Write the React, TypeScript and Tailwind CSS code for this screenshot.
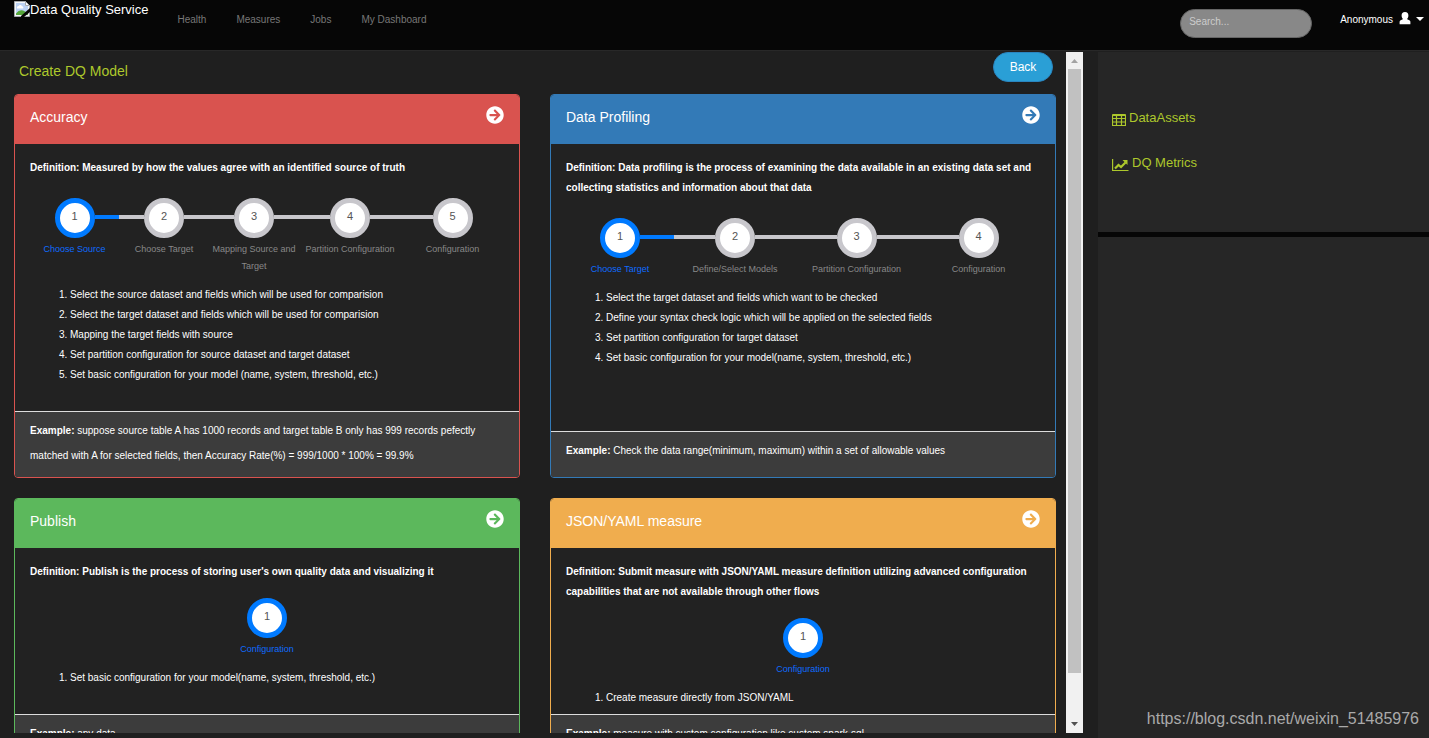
import { useId } from "react";
import clsx from "clsx";
import { FaArrowCircleRight } from "react-icons/fa";

type Card = {
  title: string;
  border: string;
  header: string;
  columns: string;
  definition: string;
  steps: string[];
  notes: string[];
  example: string;
};

const navLinks = ["Health", "Measures", "Jobs", "My Dashboard"];

const cards: Card[] = [
  {
    title: "Accuracy",
    border: "border-[#d9534f]",
    header: "bg-[#d9534f]",
    columns: "grid-cols-[89fr_90fr_90fr_102fr_103fr]",
    definition: "Measured by how the values agree with an identified source of truth",
    steps: [
      "Choose Source",
      "Choose Target",
      "Mapping Source and Target",
      "Partition Configuration",
      "Configuration",
    ],
    notes: [
      "Select the source dataset and fields which will be used for comparision",
      "Select the target dataset and fields which will be used for comparision",
      "Mapping the target fields with source",
      "Set partition configuration for source dataset and target dataset",
      "Set basic configuration for your model (name, system, threshold, etc.)",
    ],
    example:
      "suppose source table A has 1000 records and target table B only has 999 records pefectly matched with A for selected fields, then Accuracy Rate(%) = 999/1000 * 100% = 99.9%",
  },
  {
    title: "Data Profiling",
    border: "border-[#337ab7]",
    header: "bg-[#337ab7]",
    columns: "grid-cols-[108fr_122fr_121fr_123fr]",
    definition:
      "Data profiling is the process of examining the data available in an existing data set and collecting statistics and information about that data",
    steps: [
      "Choose Target",
      "Define/Select Models",
      "Partition Configuration",
      "Configuration",
    ],
    notes: [
      "Select the target dataset and fields which want to be checked",
      "Define your syntax check logic which will be applied on the selected fields",
      "Set partition configuration for target dataset",
      "Set basic configuration for your model(name, system, threshold, etc.)",
    ],
    example: "Check the data range(minimum, maximum) within a set of allowable values",
  },
  {
    title: "Publish",
    border: "border-[#5cb85c]",
    header: "bg-[#5cb85c]",
    columns: "grid-cols-1",
    definition: "Publish is the process of storing user's own quality data and visualizing it",
    steps: ["Configuration"],
    notes: ["Set basic configuration for your model(name, system, threshold, etc.)"],
    example: "any data",
  },
  {
    title: "JSON/YAML measure",
    border: "border-[#f0ad4e]",
    header: "bg-[#f0ad4e]",
    columns: "grid-cols-1",
    definition:
      "Submit measure with JSON/YAML measure definition utilizing advanced configuration capabilities that are not available through other flows",
    steps: ["Configuration"],
    notes: ["Create measure directly from JSON/YAML"],
    example: "measure with custom configuration like custom spark-sql",
  },
];

const BrokenImageIcon = () => (
  <svg width="16" height="16" viewBox="0 0 16 16" aria-hidden="true">
    <path d="M0.5 0.5H11.5L15.5 4.5V15.5H0.5Z" fill="#f4f6f8" stroke="#a4a8ac" />
    <path d="M2 2H11V5H14V14H2Z" fill="#bdd3f5" />
    <path d="M3 7.5a1.8 1.8 0 0 1 1.500-2.500 2 2 0 0 1 3.700 0.300 1.300 1.300 0 0 1 0.800 2.200Z" fill="#fff" />
    <path d="M2 14V12.500Q6 7 11 10.500L14 12V14Z" fill="#55a63a" />
    <path d="M11.500 0.500V4.500H15.500Z" fill="#fff" stroke="#a4a8ac" />
    <path d="M16 7L7 15V16H10L16 11Z" fill="#060606" />
  </svg>
);

const UserIcon = () => (
  <svg width="12" height="13" viewBox="0 0 12 13" fill="currentColor" aria-hidden="true">
    <path d="M6 0C8.400 0 9.400 1.600 9.400 3.400 9.400 5 8.800 6 8.200 6.800V7.200L10.400 8.300Q11.400 8.900 11.400 9.800V12.200H0.600V9.800Q0.600 8.900 1.600 8.300L3.800 7.200V6.800C3.200 6 2.600 5 2.600 3.400 2.600 1.600 3.600 0 6 0Z" />
  </svg>
);

const TableIcon = () => (
  <svg width="14" height="14" viewBox="0 0 14 14" fill="none" stroke="currentColor" className="mb-px" aria-hidden="true">
    <path d="M0.500 2H13.500" strokeWidth="2" />
    <path d="M0.500 1.500V12.500H13.500V1.500M0.500 5.500H13.500M0.500 9H13.500M4.500 2V12.500M9.500 2V12.500" strokeWidth="1.200" />
  </svg>
);

const LineChartIcon = () => (
  <svg width="17" height="14" viewBox="0 0 17 14" fill="none" stroke="currentColor" className="mb-px" aria-hidden="true">
    <path d="M0.600 1V12.500H16.500" strokeWidth="1.200" />
    <path d="M3 10.500L6.500 7 9 9 13.500 4.500" strokeWidth="2.200" />
    <path d="M10.500 2H15.500V7Z" fill="currentColor" stroke="none" />
  </svg>
);

function Stepper({ steps, columns }: { steps: string[]; columns: string }) {
  return (
    <div className={clsx("grid", columns, steps.length > 1 ? "mt-5" : "mt-4")}>
      {steps.map((label, i) => {
        const active = i === 0;
        const last = i === steps.length - 1;
        return (
          <div key={label} className="min-w-0 text-center">
            <div className="flex items-center">
              <span className={clsx("mb-0.5 h-1 flex-1", !active && "bg-[#c8c7cc]")} />
              <span
                className={clsx(
                  "flex size-10 items-center justify-center rounded-full border-5 bg-white pb-1 text-[11px] text-[#555]",
                  active ? "border-[#007aff]" : "border-[#c8c7cc]"
                )}
              >
                {i + 1}
              </span>
              <span
                className={clsx(
                  "mb-0.5 h-1 flex-1",
                  !last && (active ? "bg-[#007aff]" : "bg-[#c8c7cc]")
                )}
              />
            </div>
            <p
              className={clsx(
                "mt-[3px] text-[9px] leading-[17px]",
                active ? "text-[#0f6bff]" : "text-[#888]"
              )}
            >
              {label}
            </p>
          </div>
        );
      })}
    </div>
  );
}

function ModelCard({ card }: { card: Card }) {
  return (
    <section className={clsx("flex flex-col overflow-hidden rounded border bg-[#222]", card.border)}>
      <div className={clsx("flex h-[49px] items-start justify-between px-[15px] pt-[11px]", card.header)}>
        <h2 className="text-sm leading-[22px]">{card.title}</h2>
        <button type="button" aria-label={`Create ${card.title}`} className="cursor-pointer">
          <FaArrowCircleRight size={18} />
        </button>
      </div>
      <div className="min-h-[166px] flex-1 px-[15px] pt-3.5 pb-1.5">
        <p className="text-[10px] leading-5 font-bold">{`Definition: ${card.definition}`}</p>
        <Stepper steps={card.steps} columns={card.columns} />
        <ol className="mt-2.5 list-decimal pl-10 text-[10px] leading-5">
          {card.notes.map((note) => (
            <li key={note}>{note}</li>
          ))}
        </ol>
      </div>
      <div className="min-h-[46px] border-t border-[#ddd] bg-[#3c3c3c] px-[15px] pt-1.5 pb-[9px] text-[10px] leading-[25px]">
        <b>Example:</b>
        {` ${card.example}`}
      </div>
    </section>
  );
}

function Header() {
  const searchId = useId();
  return (
    <header className="flex h-[51px] shrink-0 items-start border-b border-[#282828] bg-[#060606] pl-3.5">
      <a href="#" className="flex pt-px text-[13px] leading-[18px]">
        <BrokenImageIcon />
        <span>Data Quality Service</span>
      </a>
      <nav className="ml-[29px] flex gap-[30px] pt-2.5 text-[10px] leading-5 text-[#777]">
        {navLinks.map((link) => (
          <a key={link} href="#">
            {link}
          </a>
        ))}
      </nav>
      <label htmlFor={searchId} className="sr-only">
        Search
      </label>
      <input
        id={searchId}
        type="search"
        placeholder="Search..."
        className="mt-[9px] ml-auto h-[29px] w-[132px] rounded-full border border-[#666] bg-[#888] px-2 pb-1 text-[10px] placeholder:text-[#ccc]"
      />
      <button type="button" className="mr-[5px] ml-7 flex items-start gap-1.5 pt-2.5 text-[10px] leading-5">
        Anonymous
        <span className="flex items-center gap-[5px] pt-0.5">
          <UserIcon />
          <svg width="8" height="4" viewBox="0 0 8 4" fill="currentColor" aria-hidden="true">
            <path d="M0 0H8L4 4Z" />
          </svg>
        </span>
      </button>
    </header>
  );
}

function ScrollRail() {
  return (
    <div className="flex w-[17px] shrink-0 flex-col items-center bg-[#f1f1f1]">
      <svg width="17" height="17" viewBox="0 0 17 17" aria-hidden="true">
        <path d="M5 11H12L8.500 7Z" fill="#a3a3a3" />
      </svg>
      <div className="w-[13px] flex-[604] bg-[#c1c1c1]" />
      <div className="flex-[43]" />
      <svg width="17" height="17" viewBox="0 0 17 17" aria-hidden="true">
        <path d="M5 6H12L8.500 10Z" fill="#505050" />
      </svg>
    </div>
  );
}

function Sidebar() {
  return (
    <aside className="relative flex w-[331px] shrink-0 flex-col bg-[#262626]">
      <nav className="flex h-[185px] flex-col gap-[25px] border-b-5 border-[#060606] pt-14 pl-3.5 text-[13px] leading-5 text-[#adc82c]">
        <a href="#" className="flex items-end gap-[3px]">
          <TableIcon />
          DataAssets
        </a>
        <a href="#" className="flex items-end gap-[3px]">
          <LineChartIcon />
          DQ Metrics
        </a>
      </nav>
      <p className="absolute right-2.5 bottom-[9px] text-base leading-5 text-[#aaa]">
        https://blog.csdn.net/weixin_51485976
      </p>
    </aside>
  );
}

export default function App() {
  return (
    <div className="flex h-screen flex-col bg-[#1f1f1f] font-['Liberation_Sans',Arial,sans-serif] text-white">
      <Header />
      <div className="flex min-h-0 flex-1 pt-px">
        <main className="mb-[5px] flex min-w-0 flex-1">
          <div className="min-w-0 flex-1 overflow-y-auto pr-2.5 pl-3.5 [scrollbar-width:none]">
            <div className="flex h-[42px] items-start justify-between pr-[3px] pl-[5px]">
              <h1 className="pt-[9px] text-sm leading-5 text-[#adc82c]">Create DQ Model</h1>
              <button
                type="button"
                className="h-[30px] w-[60px] rounded-full border border-[#2a85c0] bg-[#2a9fd6] text-xs"
              >
                Back
              </button>
            </div>
            <div className="grid grid-cols-2 grid-rows-[minmax(384px,auto)_auto] gap-x-[30px] gap-y-5 pb-5">
              {cards.map((card) => (
                <ModelCard key={card.title} card={card} />
              ))}
            </div>
          </div>
          <ScrollRail />
        </main>
        <div className="w-[15px] shrink-0" />
        <Sidebar />
      </div>
    </div>
  );
}
